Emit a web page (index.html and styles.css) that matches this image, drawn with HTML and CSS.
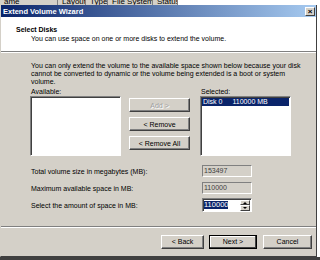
FILE: index.html
```html
<!DOCTYPE html>
<html>
    <head>
        <meta http-equiv="Content-Type" content="text/html; charset=utf-8" />
        <title>Extend Volume Wizard</title>
        <link rel="stylesheet" href="styles.css">
    </head>
    <body>
        <div class='columns'>
            <div class='col c-name'>ame</div>
            <div class='col c-layout'>Layout</div>
            <div class='col c-type'>Type</div>
            <div class='col c-fs'>File System</div>
            <div class='col c-status'>Status</div>
        </div>
        <div class='window'>
            <div class='titlebar'>
                <span class='title'>Extend Volume Wizard</span>
                <span class='close'>&#215;</span>
            </div>
            <div class='header'>
                <div class='heading'>Select Disks</div>
                <div class='subheading'>You can use space on one or more disks to extend the volume.</div>
            </div>
            <div class='content'>
                <p class='note'>You can only extend the volume to the available space shown below because your disk cannot be converted to dynamic or the volume being extended is a boot or system volume.</p>
                <div class='lists'>
                    <div class='listcol left'>
                        <label>Available:</label>
                        <div class='listbox'></div>
                    </div>
                    <div class='buttons'>
                        <button class='btn disabled'>Add &gt;</button>
                        <button class='btn'>&lt; Remove</button>
                        <button class='btn'>&lt; Remove All</button>
                    </div>
                    <div class='listcol'>
                        <label>Selected:</label>
                        <div class='listbox'>
                            <div class='item sel'><span>Disk 0</span><span>110000 MB</span></div>
                        </div>
                    </div>
                </div>
                <div class='fields'>
                    <div class='row'>
                        <span class='lbl'>Total volume size in megabytes (MB):</span>
                        <span class='field ro'>153497</span>
                    </div>
                    <div class='row'>
                        <span class='lbl'>Maximum available space in MB:</span>
                        <span class='field ro'>110000</span>
                    </div>
                    <div class='row'>
                        <span class='lbl'>Select the amount of space in MB:</span>
                        <span class='field spin'>
                            <span class='val'>110000</span>
                            <span class='arrows'><span class='up'></span><span class='down'></span></span>
                        </span>
                    </div>
                </div>
            </div>
            <div class='footer'>
                <button class='btn back'>&lt; Back</button>
                <button class='btn next'>Next &gt;</button>
                <button class='btn cancel'>Cancel</button>
            </div>
        </div>
        <div class='below'></div>
    </body>
</html>
```

FILE: styles.css
```css
body {
    margin:         0px;
    width:          320px;
    height:         260px;
    overflow:       hidden;
    background:     #ffffff;
    font-family:    "Liberation Sans", Arial, sans-serif;
    font-size:      7px;
    color:          #000000;
}

/* list view column headers behind the dialog */
div.columns {
    display:        flex;
    height:         5px;
    overflow:       hidden;
    background:     #d4d0c8;
    width:          178px;
}
div.columns div.col {
    box-sizing:     border-box;
    border-right:   1px solid #808080;
    line-height:    4px;
    font-size:      8px;
    padding-left:   4px;
    white-space:    nowrap;
    overflow:       hidden;
    flex-shrink:    0;
}
div.col.c-name   { width: 58px; padding-left: 0px; }
div.col.c-layout { width: 28px; }
div.col.c-type   { width: 22px; }
div.col.c-fs     { width: 45px; }
div.col.c-status { width: 25px; border-right: none; }

div.window {
    width:          317px;
    height:         252px;
    box-sizing:     border-box;
    background:     #d4d0c8;
    border-right:   1px solid #404040;
    border-bottom:  1px solid #404040;
    border-left:    1px solid #d4d0c8;
    display:        flex;
    flex-direction: column;
}
div.titlebar {
    height:         12px;
    background:     linear-gradient(to right, #0a246a, #a6caf0);
    display:        flex;
    align-items:    center;
    justify-content: space-between;
    padding:        0px 1px 0px 2px;
}
span.title {
    color:          #ffffff;
    font-weight:    bold;
    font-size:      7.5px;
}
span.close {
    width:          8px;
    height:         7px;
    background:     #d4d0c8;
    border:         1px solid;
    border-color:   #ffffff #404040 #404040 #ffffff;
    font-size:      8px;
    line-height:    7px;
    text-align:     center;
    font-weight:    bold;
}

div.header {
    height:         35px;
    background:     #ffffff;
    border-bottom:  1px solid #808080;
    box-shadow:     0px 1px 0px #ffffff;
    box-sizing:     border-box;
    padding:        8px 0px 0px 15px;
}
div.heading {
    font-weight:    bold;
    line-height:    9px;
}
div.subheading {
    line-height:    9px;
    padding-left:   15px;
}

div.content {
    flex:           1;
    padding:        10px 0px 0px 29px;
    border-bottom:  1px solid #808080;
    box-shadow:     0px 1px 0px #ffffff;
}
p.note {
    margin:         0px 0px 2px 1px;
    width:          270px;
    line-height:    8px;
}
div.lists {
    display:        flex;
}
div.listcol label {
    display:        block;
    line-height:    8px;
    margin-left:    1px;
}
div.listbox {
    width:          91px;
    height:         60px;
    box-sizing:     border-box;
    background:     #ffffff;
    border:         1px solid;
    border-color:   #808080 #ffffff #ffffff #808080;
    box-shadow:     inset 1px 1px 0px #404040;
    padding:        1px;
}
div.item {
    display:        flex;
    gap:            10px;
    line-height:    8px;
    padding-left:   1px;
}
div.item.sel {
    background:     #0a246a;
    color:          #ffffff;
}
div.buttons {
    display:        flex;
    flex-direction: column;
    gap:            5px;
    padding:        10px 10px 0px 8px;
}
button.btn {
    font-family:    "Liberation Sans", Arial, sans-serif;
    font-size:      7px;
    width:          61px;
    height:         14px;
    padding:        0px;
    background:     #d4d0c8;
    border:         1px solid;
    border-color:   #ffffff #404040 #404040 #ffffff;
    box-shadow:     inset -1px -1px 0px #808080;
    color:          #000000;
}
button.btn.disabled {
    color:          #a0a0a0;
    text-shadow:    1px 1px 0px #ffffff;
}

div.fields {
    padding-top:    9px;
    display:        flex;
    flex-direction: column;
    gap:            5px;
}
div.row {
    display:        flex;
    align-items:    center;
    height:         12px;
}
span.lbl {
    width:          171px;
    padding-left:   1px;
}
span.field {
    width:          50px;
    height:         12px;
    box-sizing:     border-box;
    border:         1px solid;
    border-color:   #808080 #ffffff #ffffff #808080;
    line-height:    10px;
    padding-left:   1px;
}
span.field.ro {
    color:          #404040;
}
span.field.spin {
    height:         14px;
    background:     #ffffff;
    display:        flex;
    align-items:    center;
    justify-content: space-between;
    box-shadow:     inset 1px 1px 0px #404040;
    padding:        1px;
}
span.spin span.val {
    background:     #0a246a;
    color:          #ffffff;
    line-height:    8px;
    font-size:      7.5px;
}
span.arrows {
    display:        flex;
    flex-direction: column;
    width:          10px;
    height:         11px;
}
span.arrows span {
    flex:           1;
    background:     #d4d0c8;
    border:         1px solid;
    border-color:   #ffffff #404040 #404040 #ffffff;
    position:       relative;
}
span.arrows span::after {
    content:        "";
    position:       absolute;
    left:           2px;
    top:            1px;
    border-left:    2px solid transparent;
    border-right:   2px solid transparent;
}
span.arrows span.up::after   { border-bottom: 2px solid #000000; }
span.arrows span.down::after { border-top:    2px solid #000000; }

div.footer {
    height:         29px;
    display:        flex;
    align-items:    center;
    justify-content: flex-end;
    padding-right:  4px;
    gap:            6px;
}
button.btn.back   { width: 43px; margin-right: -1px; }
button.btn.next   { width: 48px; border: 1px solid #000000; box-shadow: inset -1px -1px 0px #404040, inset 1px 1px 0px #ffffff; }
button.btn.cancel { width: 49px; }

div.below {
    height:         3px;
    background:     #404040;
}
```
